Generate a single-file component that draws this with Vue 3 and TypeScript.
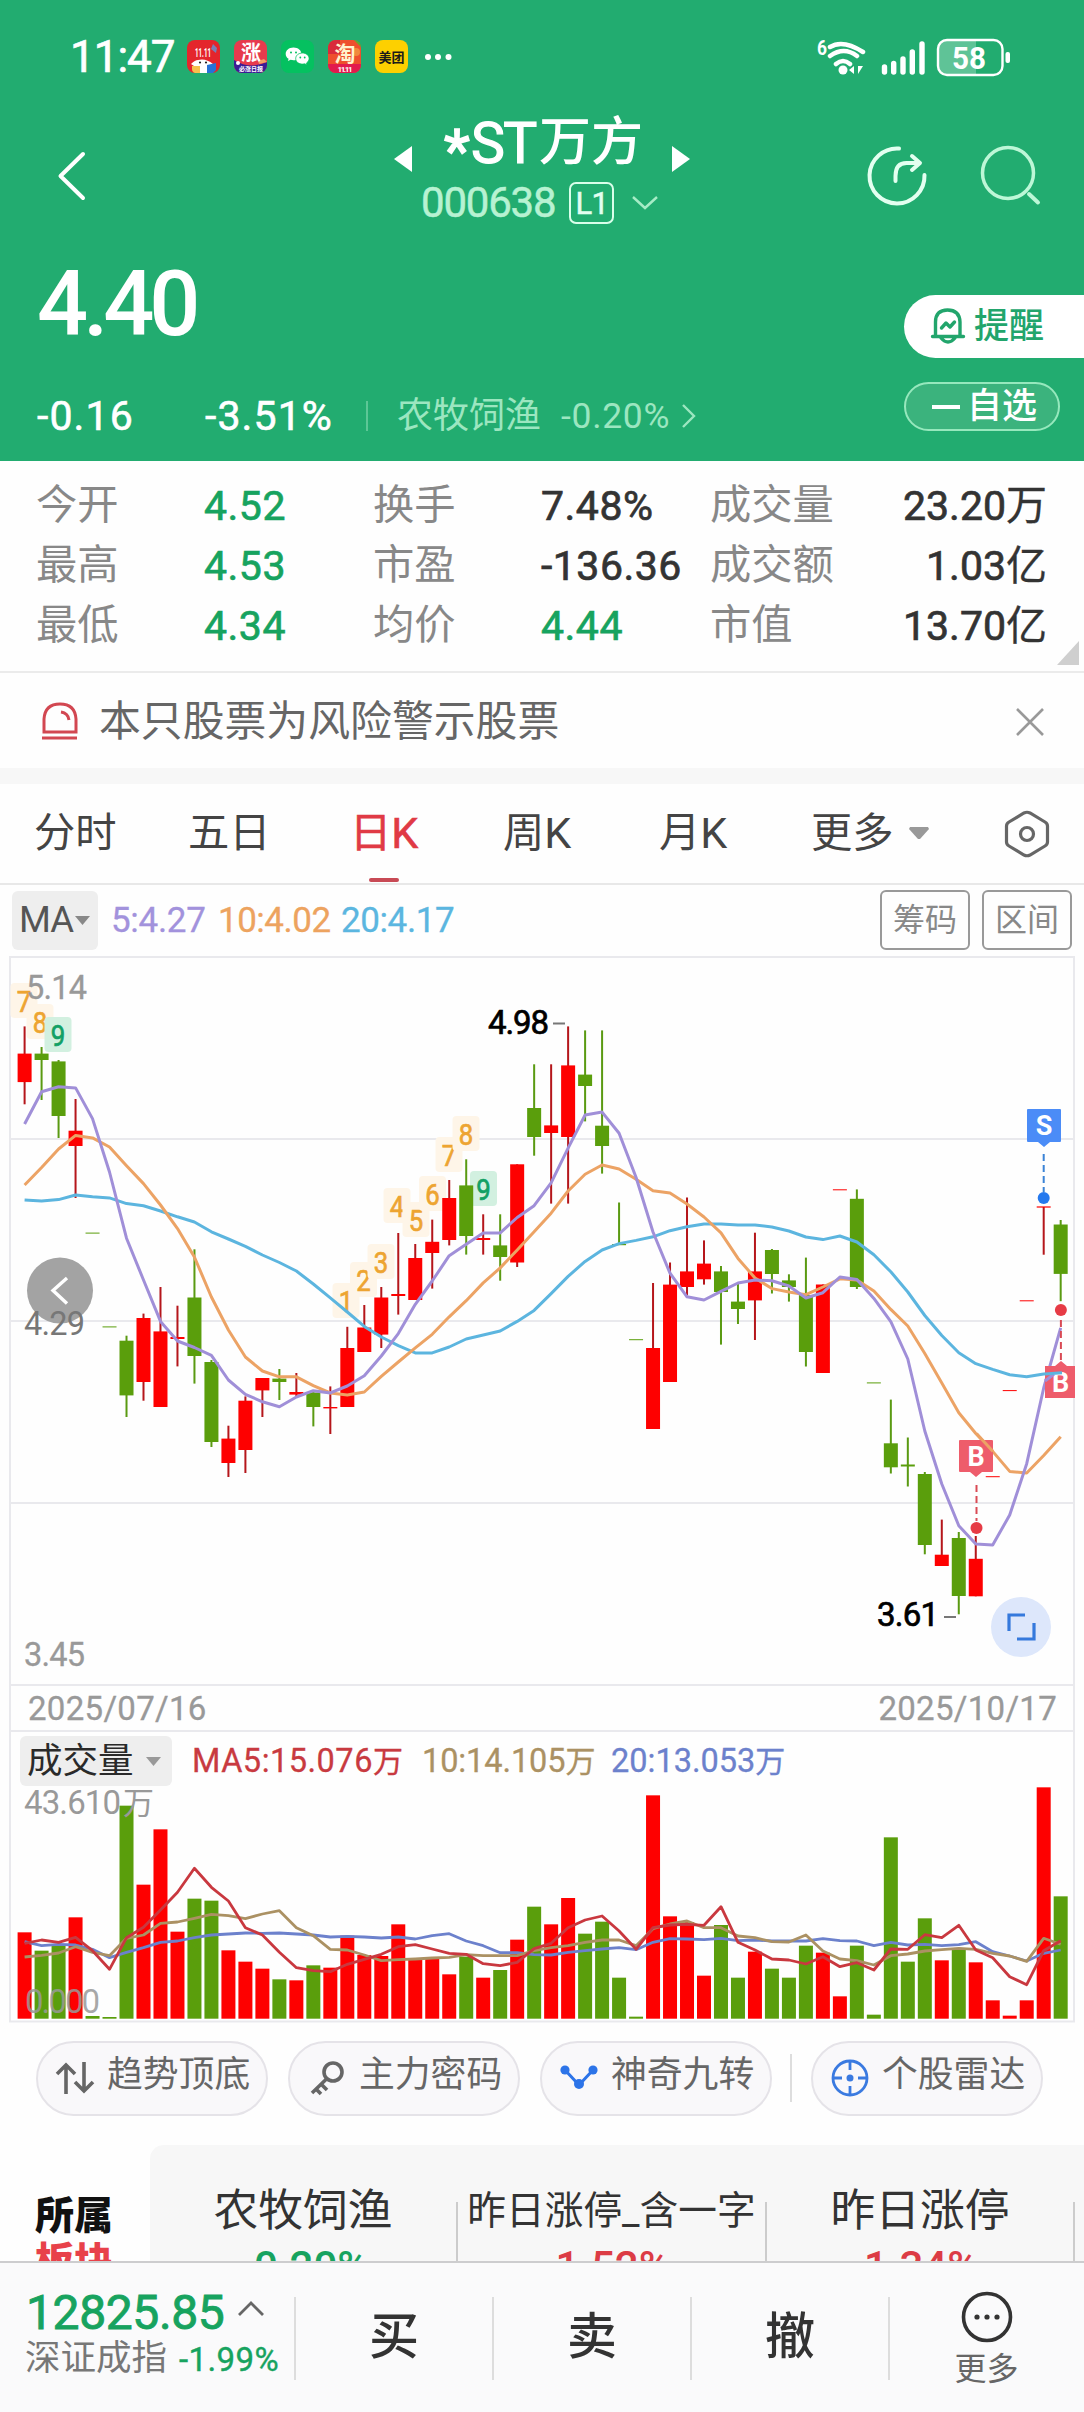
<script setup lang="ts">
type Tone = 'r' | 'g'
type Candle = [Tone, number, number, number, number]

const step = 16.985
const cx = (i: number): number => 24.6 + step * i

// tone, high, body top, body bottom, low
const candles: Candle[] = [
  ['r', 1026.4, 1053.6, 1082.1, 1104.3], ['g', 1047, 1053.6, 1060, 1100], ['g', 1060, 1061.4, 1116, 1138],
  ['r', 1099, 1130.7, 1146, 1198], ['g', 1233, 1232.6, 1233.6, 1233], ['g', 1327, 1326.4, 1327.4, 1327],
  ['g', 1335.7, 1340.7, 1395.4, 1417], ['r', 1313.6, 1318, 1382, 1400.7], ['r', 1287, 1331.4, 1407, 1407],
  ['r', 1305.7, 1337, 1339, 1366.4], ['g', 1249.3, 1297.5, 1356, 1383.6], ['g', 1360, 1362, 1442, 1447],
  ['r', 1425.7, 1438.6, 1463, 1477], ['r', 1396.4, 1400.7, 1450, 1473], ['r', 1378, 1378, 1390.4, 1417],
  ['g', 1369, 1378.6, 1382, 1400], ['r', 1373, 1392, 1394.6, 1396], ['g', 1391.4, 1392.5, 1407, 1426.4],
  ['r', 1386.4, 1407, 1408.4, 1434], ['r', 1326.8, 1348, 1407, 1407], ['r', 1305, 1327.5, 1352, 1352],
  ['r', 1287, 1297.5, 1334.6, 1348], ['r', 1233, 1294, 1296, 1314.6], ['r', 1244, 1258, 1300, 1300],
  ['r', 1219.6, 1241.8, 1253, 1288.6], ['r', 1180, 1198, 1240, 1245.4], ['g', 1159.3, 1185.4, 1236, 1254.6],
  ['r', 1214.3, 1238, 1240, 1254.6], ['g', 1214.3, 1245.4, 1257, 1280.7], ['r', 1164.3, 1164.3, 1262.5, 1267],
  ['g', 1064.3, 1108, 1137, 1155.7], ['r', 1064.3, 1125.4, 1133, 1203.6], ['r', 1026.4, 1065.4, 1137, 1203.6],
  ['g', 1030.4, 1074.6, 1086, 1121.4], ['g', 1030.4, 1125.7, 1146, 1173.6], ['g', 1202.5, 1244, 1245.2, 1245],
  ['g', 1339.6, 1339.2, 1340.2, 1339.6], ['r', 1283, 1348, 1429, 1429], ['r', 1262.5, 1284.6, 1382, 1382],
  ['r', 1197.5, 1271.4, 1287, 1295.4], ['r', 1240.4, 1263.6, 1279.3, 1284.6], ['g', 1266, 1271.4, 1292, 1344.6],
  ['g', 1284, 1301.6, 1309, 1324], ['r', 1232.7, 1271.4, 1300.4, 1340], ['g', 1249, 1250, 1274, 1293.5],
  ['g', 1274.3, 1280.4, 1287, 1301.6], ['g', 1257.6, 1295, 1352, 1366.5], ['r', 1284.5, 1284.5, 1373, 1373],
  ['r', 1189.8, 1189.3, 1190.3, 1189.8], ['g', 1189.4, 1198.8, 1287, 1289], ['g', 1382.9, 1382.4, 1383.4, 1382.9],
  ['g', 1399.6, 1443.3, 1467.3, 1473.5], ['g', 1437.5, 1464.5, 1466.5, 1486.5], ['g', 1472, 1474, 1545, 1554.3],
  ['r', 1519.6, 1554.7, 1566, 1566], ['g', 1532, 1538, 1596, 1614.3], ['r', 1536, 1558.8, 1596.3, 1596.3],
  ['r', 1476.7, 1476.2, 1477.2, 1476.7], ['r', 1390.6, 1390.1, 1391.1, 1390.6], ['r', 1300.8, 1300.3, 1301.3, 1300.8],
  ['r', 1207, 1206.4, 1207.6, 1254.7], ['g', 1220, 1224.5, 1273.9, 1301.2],
]

const ma5 = [1124, 1091.8, 1086.8, 1087.9, 1118.6, 1172, 1238.2, 1280, 1321.4, 1341, 1347.5, 1355.4, 1380, 1394.3, 1401.8, 1406.8, 1397, 1390.7, 1392.9, 1386, 1375.7, 1356, 1333.6, 1304.3, 1281, 1255.7, 1244.3, 1232.9, 1232.9, 1217.5, 1205.7, 1182.9, 1148.2, 1115, 1112.1, 1133.2, 1177.5, 1232, 1273.2, 1296.8, 1300, 1291.4, 1283, 1280, 1280.8, 1286, 1298, 1292.7, 1277, 1279.6, 1298.4, 1321.6, 1359, 1431, 1484, 1525.7, 1544, 1545, 1515, 1463.7, 1388, 1327.8]
const ma10 = [1185, 1167.5, 1149, 1135.4, 1137.9, 1147, 1165.7, 1183.6, 1205, 1228.6, 1257, 1297, 1330, 1357, 1371, 1376.8, 1376.8, 1385.7, 1393, 1395, 1392, 1376.4, 1362, 1347.9, 1334.3, 1316.8, 1300.7, 1282.9, 1267.9, 1250, 1231.8, 1213.2, 1191, 1174.3, 1165, 1169, 1179.3, 1190.7, 1193, 1204, 1217, 1232.9, 1258.4, 1278, 1288.6, 1292, 1294.7, 1287, 1278.8, 1280, 1291, 1309.4, 1326, 1353.5, 1382.9, 1412.7, 1433.5, 1451.4, 1471.4, 1473, 1455.5, 1436.7]
const ma20 = [1200, 1201, 1199.6, 1195, 1196.8, 1197.9, 1203.6, 1205.7, 1211, 1216.8, 1222, 1231.8, 1239, 1246.4, 1255, 1262.5, 1271, 1284, 1297.9, 1312, 1326.4, 1337, 1345.7, 1352.9, 1352.9, 1347, 1339, 1335, 1331, 1321.4, 1310.4, 1293.6, 1276.4, 1261.4, 1250, 1243.6, 1240.4, 1236.8, 1230.7, 1226.8, 1224, 1224, 1224.9, 1224.9, 1227, 1231, 1237, 1239.6, 1236, 1242, 1254.7, 1271.8, 1292, 1315.5, 1335.5, 1352.7, 1363.7, 1369.4, 1374.7, 1376.7, 1373.9, 1372.7]

// volume series are kept in thirds of a pixel, counted down from y = 1660
const volTop = [817, 872, 856, 772, 1068, 1071, 437, 674, 508, 815, 716, 722, 871, 905, 926, 958, 961, 916, 923, 827, 885, 888, 793, 899, 897, 943, 890, 953, 930, 839, 740, 793, 714, 821, 785, 953, 1070, 406, 769, 786, 947, 795, 953, 875, 926, 953, 857, 878, 1009, 857, 1064, 532, 905, 775, 901, 870, 907, 1021, 1067, 1021, 382, 709]
const vol5 = [850, 840, 847, 832, 872, 928, 833, 802, 750, 697, 625, 682, 723, 803, 825, 877, 923, 932, 935, 913, 898, 883, 860, 854, 867, 880, 883, 911, 917, 907, 866, 850, 803, 780, 768, 813, 868, 803, 795, 793, 796, 740, 847, 870, 897, 900, 912, 890, 920, 908, 930, 867, 868, 824, 833, 796, 870, 893, 950, 974, 872, 842]
const vol10 = [891, 886, 879, 860, 877, 887, 835, 825, 790, 786, 775, 763, 767, 776, 762, 752, 803, 827, 868, 870, 885, 902, 899, 897, 894, 892, 884, 887, 887, 887, 872, 863, 857, 847, 840, 840, 857, 806, 792, 783, 803, 803, 828, 833, 845, 846, 825, 873, 897, 902, 915, 887, 882, 873, 869, 865, 868, 880, 888, 904, 835, 853]
const vol20 = [845, 857, 853, 855, 868, 893, 877, 863, 847, 843, 833, 825, 822, 819, 820, 819, 822, 825, 831, 829, 831, 834, 831, 837, 827, 821, 843, 857, 878, 878, 884, 885, 877, 872, 867, 863, 869, 847, 836, 837, 839, 835, 842, 840, 843, 843, 843, 836, 842, 843, 857, 847, 855, 853, 857, 854, 845, 875, 888, 903, 880, 870]

const volY = (v: number): number => 1660 + v / 3
const line = (ys: number[]): string => ys.map((y, i) => `${cx(i).toFixed(1)},${y.toFixed(1)}`).join(' ')
const volLine = (vs: number[]): string => line(vs.map(volY))

const fill = (t: Tone): string => (t === 'r' ? '#fe0000' : '#5a9e0c')
const wick = (t: Tone): string => (t === 'r' ? '#b5161b' : '#5a9a12')

const counts: { n: number; x: number; y: number }[] = [
  { n: 7, x: 24, y: 1001 }, { n: 8, x: 40, y: 1022 }, { n: 9, x: 58, y: 1035 },
  { n: 1, x: 346, y: 1301 }, { n: 2, x: 363.5, y: 1280 }, { n: 3, x: 381, y: 1262 },
  { n: 4, x: 397, y: 1206 }, { n: 5, x: 416, y: 1220 }, { n: 6, x: 432.5, y: 1194 },
  { n: 7, x: 449, y: 1155 }, { n: 8, x: 466, y: 1134 }, { n: 9, x: 483.5, y: 1189 },
]

const stats = [
  ['今开', '4.52', 'up', '换手', '7.48%', '', '成交量', '23.20', '万'],
  ['最高', '4.53', 'up', '市盈', '-136.36', '', '成交额', '1.03', '亿'],
  ['最低', '4.34', 'up', '均价', '4.44', 'up', '市值', '13.70', '亿'],
]
</script>

<template>
  <div class="page">
    <header class="head">
      <div class="status">
        <span class="time">11:47</span>
        <div class="apps">
          <svg class="app" viewBox="0 0 33 33">
            <rect width="33" height="33" rx="8" fill="#e4252c" />
            <path d="M26 4l4 4-1 5-5-4z" fill="#7a7fb5" />
            <text x="16" y="17" text-anchor="middle" font-size="13" font-weight="700" fill="#fff" textLength="16" lengthAdjust="spacingAndGlyphs">11.11</text>
            <path d="M4 24q4-4 7-4 8-2 15 4l-3 2H7z" fill="#fff" />
            <path d="M5 26h10v7H8q-3-1-3-4z" fill="#f6c14c" />
            <path d="M13 26h8v7h-8z" fill="#fff" />
            <path d="M20 25l9-2v7l-3 3h-6z" fill="#2573d8" />
            <circle cx="13" cy="22.500" r="1.100" fill="#222" /><circle cx="19" cy="22.500" r="1.100" fill="#222" />
          </svg>
          <svg class="app" viewBox="0 0 33 33">
            <defs><clipPath id="c2"><rect width="33" height="33" rx="8" /></clipPath></defs>
            <g clip-path="url(#c2)">
              <rect width="33" height="33" fill="#e73a4d" />
              <path d="M0 20q16 10 33 2v11H0z" fill="#3a1c96" />
              <path d="M24 21l6-2 3 3-8 2z" fill="#f2a066" />
            </g>
            <text x="17" y="20" text-anchor="middle" font-size="20" font-weight="700" fill="#fff">涨</text>
            <text x="17" y="31" text-anchor="middle" font-size="6" font-weight="700" fill="#fff">必涨日报</text>
            <circle cx="4" cy="23" r="2" fill="#fff" />
          </svg>
          <svg class="app" viewBox="0 0 33 33">
            <rect width="33" height="33" rx="8" fill="#05c160" />
            <path d="M12.500 7.500c-4.600 0-7.800 2.900-7.800 6.400 0 2 1.100 3.700 2.900 4.900l-.7 2.300 2.700-1.400c.9.300 1.900.5 2.900.5 4.600 0 7.900-2.800 7.900-6.300s-3.300-6.400-7.900-6.400z" fill="#fff" />
            <path d="M21.500 13c-4 0-6.800 2.500-6.800 5.600s2.800 5.500 6.800 5.500c.8 0 1.600-.1 2.300-.3l2.300 1.200-.6-2c1.600-1.100 2.600-2.600 2.600-4.400 0-3.100-2.800-5.600-6.600-5.600z" fill="#fff" stroke="#05c160" stroke-width=".8" />
            <circle cx="10" cy="12.500" r="1" fill="#05c160" /><circle cx="15" cy="12.500" r="1" fill="#05c160" />
            <circle cx="19.300" cy="17.500" r=".9" fill="#05c160" /><circle cx="23.700" cy="17.500" r=".9" fill="#05c160" />
          </svg>
          <svg class="app" viewBox="0 0 33 33">
            <defs><clipPath id="c4"><rect width="33" height="33" rx="8" /></clipPath></defs>
            <g clip-path="url(#c4)">
              <rect width="33" height="33" fill="#ee4f2d" />
              <rect width="12" height="14" fill="#d92a3a" />
              <path d="M26 0h7v7z" fill="#55b330" />
              <circle cx="28" cy="12" r="4" fill="#f08a3c" />
              <rect y="24" width="33" height="9" fill="#e21a4e" />
            </g>
            <text x="17" y="21" text-anchor="middle" font-size="21" font-weight="700" fill="#fff3cf">淘</text>
            <text x="17" y="31.500" text-anchor="middle" font-size="8" font-weight="700" fill="#fff" textLength="15">11.11</text>
          </svg>
          <svg class="app" viewBox="0 0 33 33">
            <rect width="33" height="33" rx="8" fill="#fdd000" />
            <text x="16.500" y="21.500" text-anchor="middle" font-size="13" font-weight="700" fill="#1a1a1a">美团</text>
          </svg>
        </div>
        <svg class="dots" width="28" height="8" viewBox="0 0 28 8"><circle cx="4" cy="4" r="3" fill="#fff" /><circle cx="14" cy="4" r="3" fill="#fff" /><circle cx="24.500" cy="4" r="3" fill="#fff" /></svg>
        <svg class="signals" width="196" height="40" viewBox="816 35 196 40" fill="none" stroke="#fff">
          <text x="817" y="53" font-size="20" font-weight="700" fill="#fff" stroke="none" textLength="10" lengthAdjust="spacingAndGlyphs">6</text>
          <path d="M830 45q13-8 33 5M830 54q14-10 27 0M836 62q7-6 14 0" stroke-width="4.500" stroke-linecap="round" />
          <circle cx="843" cy="68" r="4.500" fill="#fff" stroke="none" />
          <path d="M854 64v8l-5-4zM858 64v8l5-8z" fill="#fff" stroke="none" />
          <path d="M884.500 65v5M893.700 61.500v8.500M903 57v13M912.300 50v20M922 42v28" stroke-width="5.400" stroke-linecap="round" />
          <path d="M945 38h31v34h-31q-7 0-7-8V46q0-8 7-8z" fill="#fff" fill-opacity=".28" stroke="none" />
          <rect x="938" y="38" width="64.500" height="35" rx="9" stroke-width="2.400" />
          <rect x="1005.500" y="50" width="4.500" height="11" rx="2" fill="#fff" stroke="none" />
          <text x="969" y="67" text-anchor="middle" font-size="32" font-weight="700" fill="#fff" stroke="none" textLength="34" lengthAdjust="spacingAndGlyphs">58</text>
        </svg>
      </div>

      <div class="nav">
        <svg class="back" width="30" height="54" viewBox="57 149 30 54" fill="none" stroke="#fff" stroke-width="4" stroke-linecap="round" stroke-linejoin="round"><path d="M83 154L60.500 176 83 198" /></svg>
        <svg class="tri" width="20" height="28" viewBox="0 0 20 28"><path d="M18 1v26L0 14z" fill="#fff" /></svg>
        <div class="title">
          <div class="name"><span class="star">*</span><span class="st">ST</span>万方</div>
          <div class="code">
            <span>000638</span><em>L1</em>
            <svg width="26" height="14" viewBox="0 0 26 14" fill="none" stroke="#a6ecc6" stroke-width="2.400"><path d="M1 1l12 11L25 1" /></svg>
          </div>
        </div>
        <svg class="tri right" width="20" height="28" viewBox="0 0 20 28"><path d="M1 1v26l18-13z" fill="#fff" /></svg>
        <svg class="tools" width="180" height="66" viewBox="866 142 180 66" fill="none" stroke-width="4" stroke-linecap="round">
          <path d="M900 148.500A27.500 27.500 0 1 0 925.500 175" stroke="#e3fff0" />
          <path d="M896.500 181v-5q0-13 11-13h12M913 156l8 7-8 7" stroke="#e3fff0" stroke-linejoin="round" />
          <circle cx="1009" cy="173" r="25.500" stroke="#bdf7d7" stroke-width="3.500" />
          <path d="M1030 194l9 8.500" stroke="#bdf7d7" />
        </svg>
      </div>

      <div class="quote">
        <div class="left">
          <div class="price">4.40</div>
          <div class="chg">
            <span class="c1">-0.16</span><span class="c2">-3.51%</span><i></i>
            <span class="ind">农牧饲渔</span><span class="c3">-0.20%</span>
            <svg width="16" height="26" viewBox="0 0 16 26" fill="none" stroke="#9ce6c0" stroke-width="2.400"><path d="M2 2l11 11L2 24" /></svg>
          </div>
        </div>
        <div class="acts">
          <div class="remind">
            <svg width="36" height="38" viewBox="0 0 36 38" fill="none" stroke="#22a56c" stroke-width="3.400" stroke-linejoin="round" stroke-linecap="round">
              <path d="M5.500 29V15q0-12 12-12t12.500 12v14M2.500 29.500h31M11 31q7 8 14 0M11.500 21l4.500-5 4 4 4.500-5" />
            </svg>
            提醒
          </div>
          <div class="fav"><b></b>自选</div>
        </div>
      </div>
    </header>

    <section class="stats">
      <div v-for="s in stats" :key="s[0]" class="row">
        <span class="lab a">{{ s[0] }}</span><span class="val b" :class="s[2]">{{ s[1] }}</span>
        <span class="lab a">{{ s[3] }}</span><span class="val b" :class="s[5]">{{ s[4] }}</span>
        <span class="lab">{{ s[6] }}</span><span class="val end">{{ s[7] }}<u>{{ s[8] }}</u></span>
      </div>
      <svg class="corner" width="24" height="26" viewBox="0 0 24 26"><path d="M23 1v24H1z" fill="#cfcfcf" /></svg>
    </section>

    <section class="alert">
      <svg width="38" height="40" viewBox="0 0 38 40" fill="none" stroke="#d24751" stroke-width="3"><path d="M3 30V17Q4 2 19 2t16 15v13zM1 36h35M20 10q7 1 8 8" /></svg>
      <span>本只股票为风险警示股票</span>
      <svg class="x" width="28" height="28" viewBox="0 0 28 28" fill="none" stroke="#999" stroke-width="2.600"><path d="M1 1l26 26M27 1L1 27" /></svg>
    </section>

    <nav class="tabs">
      <span class="t1">分时</span><span class="t2">五日</span><span class="t3 on">日<q>K</q></span><span class="t4">周<q>K</q></span><span class="t5">月<q>K</q></span>
      <span class="t6">更多<svg width="22" height="13" viewBox="0 0 22 13"><path d="M2 0h18l1 2-9 10h-2L1 2z" fill="#999" /></svg></span>
      <svg class="hex" width="46" height="48" viewBox="0 0 46 48" fill="none" stroke="#666" stroke-width="3.200"><path d="M20 3q3-1.500 6 0l15 9q2.500 1.500 2.500 4v16q0 2.500-2.500 4l-15 9q-3 1.500-6 0L5 36q-2.500-1.500-2.500-4V16q0-2.500 2.500-4z" /><circle cx="23" cy="24" r="6.500" /></svg>
    </nav>

    <div class="ma">
      <span class="mabox">MA<svg width="15" height="9" viewBox="0 0 15 9"><path d="M0 0h15L7.500 9z" fill="#888" /></svg></span>
      <span class="m5">5:4.27</span><span class="m10">10:4.02</span><span class="m20">20:4.17</span>
      <span class="btn first">筹码</span><span class="btn">区间</span>
    </div>

    <svg class="kline" width="1084" height="731" viewBox="0 954 1084 731">
      <g stroke="#e9e9ed" stroke-width="2">
        <path d="M9 957h1066M9 1139h1066M9 1321h1066M9 1503h1066M10 956v729M1074 956v729" fill="none" />
      </g>
      <g v-for="(c, i) in counts" :key="i">
        <rect :x="c.x - 13.500" :y="c.y - 18" width="27" height="35" rx="4" :fill="c.n === 9 ? '#d2f0e0' : '#fef5e8'" />
        <text :x="c.x" :y="c.y + 10.500" text-anchor="middle" font-size="29.500" :fill="c.n === 9 ? '#12a065' : '#eda431'" :stroke="c.n === 9 ? '#12a065' : '#eda431'" stroke-width=".7" textLength="14.500" lengthAdjust="spacingAndGlyphs">{{ c.n }}</text>
      </g>
      <g font-size="32.500" fill="#999" stroke="#999" stroke-width=".3">
        <text x="26" y="999" textLength="61">5.14</text>
        <text x="24" y="1666" textLength="61">3.45</text>
      </g>
      <g v-for="(k, i) in candles" :key="'k' + i">
        <rect :x="cx(i) - 1" :y="k[1]" width="2" :height="Math.max(0, k[4] - k[1])" :fill="wick(k[0])" />
        <rect :x="cx(i) - 7" :y="k[2]" width="14" :height="k[3] - k[2]" :fill="fill(k[0])" />
      </g>
      <g fill="none" stroke-width="3" stroke-linejoin="round">
        <polyline :points="line(ma20)" stroke="#5cb5df" />
        <polyline :points="line(ma10)" stroke="#eca365" />
        <polyline :points="line(ma5)" stroke="#a08fd8" />
      </g>
      <circle cx="60" cy="1290.500" r="33" fill="#a3a3a3" />
      <path d="M67 1278l-14 12.500 14 13" fill="none" stroke="#fff" stroke-width="3.400" />
      <text x="24" y="1335" font-size="32.500" fill="#777" textLength="61">4.29</text>
      <g font-size="33" fill="#000" stroke="#000" stroke-width=".7">
        <text x="488" y="1033.500" textLength="61">4.98</text>
        <text x="877" y="1626" textLength="62">3.61</text>
      </g>
      <path d="M553 1023.500h12M944 1617h12" stroke="#777" stroke-width="2" />
      <g stroke-width="2" stroke-dasharray="7 4">
        <path d="M1043.700 1154v38" stroke="#3b83d6" />
        <path d="M976.500 1485v36M1060.900 1320v40" stroke="#d94a55" />
      </g>
      <circle cx="1043.700" cy="1198" r="6" fill="#2579ee" />
      <circle cx="976.500" cy="1528" r="6" fill="#e63b45" />
      <circle cx="1060.900" cy="1310" r="6" fill="#e63b45" />
      <path d="M1028 1109h32q1 0 1 1v31q0 1-1 1h-10l-6 5-6-5h-10q-1 0-1-1v-31q0-1 1-1z" fill="#4b8cf7" />
      <path d="M960 1440h32q1 0 1 1v30q0 1-1 1h-10l-6 5-6-5h-10q-1 0-1-1v-30q0-1 1-1z" fill="#ee5c6b" />
      <path d="M1045 1366h10l6-5 6 5h8v32h-30z" fill="#ee5c6b" />
      <g font-size="27" font-weight="700" fill="#fff" text-anchor="middle">
        <text x="1044" y="1135">S</text><text x="976" y="1465.500">B</text><text x="1060.500" y="1391.500">B</text>
      </g>
      <path d="M993 1451.400L976.500 1433.500" stroke="#eca365" stroke-width="3" />
      <path d="M1045 1381l9-7" stroke="#a08fd8" stroke-width="3" /><path d="M1045 1373.900l17-1.200" stroke="#5cb5df" stroke-width="3" />
      <circle cx="1021" cy="1627" r="30" fill="#dde7fb" />
      <path d="M1009 1631v-16h16M1034 1623v16h-17" fill="none" stroke="#3579dc" stroke-width="3.200" />
    </svg>

    <div class="dates"><span>2025/07/16</span><span>2025/10/17</span></div>

    <div class="vol">
      <div class="volhead">
        <span class="volbox">成交量<svg width="15" height="9" viewBox="0 0 15 9"><path d="M0 0h15L7.500 9z" fill="#999" /></svg></span>
        <span class="v5">MA5:15.076<u>万</u></span><span class="v10">10:14.105<u>万</u></span><span class="v20">20:13.053<u>万</u></span>
      </div>
      <svg class="volsvg" width="1084" height="237" viewBox="0 1786 1084 237">
        <path d="M10 1786v235.500h1064v-235.500" fill="none" stroke="#e9e9ed" stroke-width="2" />
        <rect v-for="(v, i) in volTop" :key="i" :x="cx(i) - 7" :y="volY(v)" width="14" :height="2018.700 - volY(v)" :fill="fill(candles[i][0])" />
        <g fill="none" stroke-width="2.800" stroke-linejoin="round">
          <polyline :points="volLine(vol20)" stroke="#6c81cc" />
          <polyline :points="volLine(vol10)" stroke="#ab9163" />
          <polyline :points="volLine(vol5)" stroke="#c9383f" />
        </g>
        <g font-size="33" fill="#999">
          <text x="24" y="1814" textLength="97">43.610</text><text x="123" y="1814" font-size="31">万</text>
          <text x="25" y="2013" textLength="75" fill-opacity=".85">0.000</text>
        </g>
      </svg>
    </div>

    <div class="pills">
      <span class="pill"><svg width="40" height="34" viewBox="0 0 40 34" fill="none" stroke="#666" stroke-width="3.600"><path d="M11 33V4M2 13l9-9 9 9M29 1v29M20 21l9 9 9-9" /></svg>趋势顶底</span>
      <span class="pill"><svg width="40" height="36" viewBox="-4 0 40 36" fill="none" stroke="#666" stroke-width="3.600"><circle cx="22" cy="12" r="9" /><path d="M16 18.500L1 33M10 24l6 6M5 29l5 5" /></svg>主力密码</span>
      <span class="pill"><svg width="40" height="30" viewBox="0 0 40 30"><path d="M6 7l14 15L34 7" fill="none" stroke="#2d74e8" stroke-width="3" /><g fill="#2d74e8"><circle cx="6" cy="7" r="4.600" /><circle cx="20" cy="21" r="5" /><circle cx="34" cy="7" r="4.600" /></g></svg>神奇九转</span>
      <i></i>
      <span class="pill last"><svg width="40" height="40" viewBox="0 0 40 40" fill="none" stroke="#3a7ae0" stroke-width="2.800"><circle cx="20" cy="20" r="17" /><path d="M20 3v9M20 28v9M3 20h9M28 20h9" /><circle cx="20" cy="20" r="3.500" fill="#3a7ae0" stroke="none" /></svg>个股雷达</span>
    </div>

    <section class="sector">
      <div class="own"><span>所属</span><span class="red">板块</span></div>
      <div class="cards">
        <div class="card w1"><span>农牧饲渔</span><b class="dn">-0.20%</b></div>
        <div class="card w2"><span>昨日涨停_含一字</span><b>1.52%</b></div>
        <div class="card w3"><span>昨日涨停</span><b>1.34%</b></div>
      </div>
    </section>

    <footer class="bar">
      <div class="index">
        <div class="top">12825.85<svg width="26" height="16" viewBox="0 0 26 16" fill="none" stroke="#666" stroke-width="2.800"><path d="M1 14L13 2l12 12" /></svg></div>
        <div class="bot"><span>深证成指</span><b>-1.99%</b></div>
      </div>
      <div class="op">买</div><div class="op">卖</div><div class="op">撤</div>
      <div class="more">
        <svg width="52" height="52" viewBox="0 0 52 52"><circle cx="26" cy="26" r="23.500" fill="none" stroke="#333" stroke-width="3.600" /><g fill="#333"><circle cx="16" cy="26" r="2.600" /><circle cx="26" cy="26" r="2.600" /><circle cx="36" cy="26" r="2.600" /></g></svg>
        <span>更多</span>
      </div>
    </footer>
  </div>
</template>

<style>
body { margin: 0; background: #fff; }
</style>

<style scoped>
.page { width: 1084px; height: 2412px; overflow: hidden; background: #fefefe; display: flex; flex-direction: column; font-family: Roboto, "Noto Sans CJK SC", sans-serif; box-sizing: border-box; line-height: 1; white-space: nowrap; }
.page * { box-sizing: border-box; }
svg { display: block; flex: none; }
u { text-decoration: none; }
q { quotes: none; }
i, em { font-style: normal; }

.head { height: 461px; flex: none; background: #22ac70; color: #fff; display: flex; flex-direction: column; }
.status { height: 112px; padding: 1px 0 0 70px; display: flex; align-items: center; }
.time { width: 117px; font-size: 44px; letter-spacing: -1px; -webkit-text-stroke: .7px; }
.apps { display: flex; gap: 14px; }
.app { width: 33px; height: 33px; }
.dots { margin-left: 16px; }
.signals { margin-left: 364px; }

.nav { height: 128px; display: flex; align-items: flex-start; padding-left: 57px; }
.back { margin-top: 37px; }
.tri { margin: 33px 0 0 307px; }
.title { width: 240px; margin-left: 7px; }
.name { font-size: 52px; font-weight: 500; height: 66px; line-height: 61px; padding-left: 23px; display: flex; }
.star { font-weight: 400; -webkit-text-stroke: 1.500px; font-size: 60px; line-height: 78px; width: 27px; }
.st { font-weight: 400; -webkit-text-stroke: 1.200px; font-size: 57px; line-height: 64px; width: 68px; letter-spacing: -1.500px; }
.code { display: flex; align-items: center; height: 50px; color: #b7f2d2; font-size: 42px; letter-spacing: -1.200px; -webkit-text-stroke: .5px; }
.code em { width: 45px; height: 42px; border: 2.500px solid #d9ffea; border-radius: 7px; margin: 0 18px 0 14px; font-size: 31px; letter-spacing: -.5px; display: flex; align-items: center; justify-content: center; color: #e3fff0; }
.tri.right { margin-left: 10px; }
.tools { margin: 30px 0 0 174px; }

.quote { flex: 1; display: flex; justify-content: space-between; padding-left: 37px; }
.price { font-size: 90px; font-weight: 500; letter-spacing: -5px; margin-top: 18px; height: 123px; line-height: 94px; }
.chg { display: flex; align-items: center; height: 70px; font-size: 41px; line-height: 70px; }
.c1 { width: 168px; letter-spacing: 1.100px; -webkit-text-stroke: .6px; }
.c2 { width: 161px; letter-spacing: 1.100px; -webkit-text-stroke: .6px; }
.chg i { width: 2px; height: 30px; background: #5cc796; margin-right: 29px; }
.ind { font-size: 36px; color: #9ce6c0; width: 164px; }
.c3 { font-size: 35.500px; color: #9ce6c0; width: 120px; letter-spacing: .7px; }
.acts { width: 180px; }
.remind { margin-top: 55px; height: 63px; border-radius: 32px 0 0 32px; background: #fff; color: #22a56c; font-size: 35px; font-weight: 500; display: flex; align-items: center; padding: 0 0 1px 26px; gap: 8px; }
.fav { margin-top: 24px; width: 156px; height: 49px; border: 2px solid #96e8bd; border-radius: 25px; background: #3bb37d; display: flex; align-items: center; padding: 0 0 1px 26px; font-size: 35px; font-weight: 500; }
.fav b { width: 28px; height: 3.500px; background: #fff; margin: 2px 7px 0 0; }

.stats { height: 212px; flex: none; border-bottom: 2px solid #ebebeb; padding: 15px 37px 0 36px; position: relative; }
.row { display: flex; height: 60px; align-items: center; }
.lab { font-size: 41.300px; color: #888; }
.lab.a { width: 168px; }
.val { font-size: 41px; color: #333; letter-spacing: .5px; -webkit-text-stroke: .7px; }
.val.b { width: 169px; }
.val.up { color: #17a35f; }
.val.end { margin-left: auto; letter-spacing: 0; }
.val u { font-size: 41px; -webkit-text-stroke: .3px; }
.corner { position: absolute; right: 4px; bottom: 5px; }

.alert { height: 111px; flex: none; border-bottom: 16px solid #f7f7f7; display: flex; align-items: center; padding: 2px 40px 0 41px; font-size: 41.850px; color: #666; }
.alert span { margin-left: 20px; }
.x { margin-left: auto; }

.tabs { height: 101px; flex: none; border-bottom: 2px solid #e8e8e8; display: flex; align-items: center; padding-left: 34px; font-size: 41.300px; color: #444; }
.tabs > span { height: 99px; line-height: 97px; display: flex; align-items: center; }
.tabs q { font-size: 43px; }
.t1 { width: 154px; }
.t2 { width: 162px; }
.t3 { width: 153px; }
.t4 { width: 156px; }
.t5 { width: 152px; }
.t6 { width: 193px; }
.t6 svg { margin-left: 14px; }
.on { color: #e03a45; position: relative; -webkit-text-stroke: .6px; }
.on::after { content: ""; position: absolute; left: 19px; bottom: 1px; width: 30px; height: 4px; border-radius: 2px; background: #c84a55; }

.ma { height: 69px; flex: none; display: flex; align-items: center; padding: 1px 12px 0; font-size: 35px; }
.mabox { width: 86px; height: 59px; background: #eee; border-radius: 6px; display: flex; align-items: center; justify-content: center; color: #555; font-size: 36.500px; gap: 2px; letter-spacing: -1px; padding-right: 1px; }
.m5 { color: #a292dc; width: 107px; margin-left: 13px; letter-spacing: -.3px; -webkit-text-stroke: .3px; }
.m10 { color: #eda35f; width: 123px; letter-spacing: -.5px; -webkit-text-stroke: .3px; }
.m20 { color: #5bb6e0; letter-spacing: -.4px; -webkit-text-stroke: .3px; }
.btn { width: 90px; height: 60px; border: 2px solid #999; border-radius: 6px; font-size: 32px; color: #888; display: flex; align-items: center; justify-content: center; margin-left: 12px; }
.btn.first { margin-left: auto; }

.kline { font-family: Roboto, "Noto Sans CJK SC", sans-serif; }
.dates { flex: none; height: 48px; margin: -1px 9px 0 9px; border: 2px solid #e9e9ed; display: flex; justify-content: space-between; align-items: center; padding: 1px 16px 0 17px; font-size: 33px; letter-spacing: .3px; color: #999; -webkit-text-stroke: .3px; }
.vol { flex: none; }
.volhead { height: 54px; margin: 0 9px; border: solid #e9e9ed; border-width: 0 2px; display: flex; align-items: center; padding: 4px 0 0 9px; font-size: 32.500px; }
.volbox { width: 152px; height: 50px; background: #eee; border-radius: 6px; display: flex; align-items: center; padding: 1px 0 0 7px; font-size: 35.500px; color: #2a2a2a; gap: 12px; }
.volhead u { font-size: 30px; letter-spacing: 0; }
.v5 { color: #c83a40; width: 230px; margin-left: 20px; letter-spacing: .5px; -webkit-text-stroke: .3px; }
.v10 { color: #ab9163; width: 189px; letter-spacing: -.1px; -webkit-text-stroke: .3px; }
.v20 { color: #6c81cc; -webkit-text-stroke: .3px; }

.pills { height: 122px; flex: none; display: flex; align-items: center; padding: 0 0 12px 36px; gap: 20px; }
.pill { width: 232px; height: 75px; border: 2px solid #e5e3e8; border-radius: 38px; background: #f9f8fa; display: flex; align-items: center; font-size: 35.800px; color: #666; padding: 0 0 5px 17px; gap: 12px; }
.pill svg { margin-top: 5px; }
.pills i { width: 2px; height: 48px; background: #ddd; margin: 0 -1px 0 -2px; }

.sector { height: 116px; flex: none; overflow: hidden; display: flex; }
.own { width: 150px; padding: 48px 0 0 35px; font-size: 39px; font-weight: 900; color: #111; line-height: 46px; display: flex; flex-direction: column; }
.own .red { color: #e8414a; }
.cards { flex: 1; background: #f7f7f7; border-radius: 14px 0 0 0; display: flex; }
.card { display: flex; flex-direction: column; align-items: center; color: #333; font-size: 44.800px; position: relative; }
.card::after { content: ""; position: absolute; right: 0; top: 57px; bottom: 0; width: 2px; background: #ccc; }
.card span { margin-top: 34px; height: 62px; line-height: 64px; margin-right: 2px; }
.card b { font-size: 42px; font-weight: 500; line-height: 42px; margin-top: 5px; color: #dc3c45; }
.card b.dn { color: #17a35f; }
.w1 { width: 308px; }
.w2 { width: 309px; font-size: 38.700px; }
.w3 { width: 308px; }

.bar { flex: 1; background: #fafafb; border-top: 2px solid #cdcdcf; display: flex; }
.index { width: 294px; padding: 24px 0 0 25px; }
.top { display: flex; align-items: center; gap: 14px; font-size: 48px; height: 52px; color: #17a35f; letter-spacing: -.4px; -webkit-text-stroke: .9px; padding-left: 1px; }
.top svg { margin-bottom: 8px; }
.bot { display: flex; align-items: center; height: 40px; font-size: 35.500px; color: #777; }
.bot b { font-weight: 400; font-size: 33px; color: #17a35f; margin-left: 12px; letter-spacing: .4px; -webkit-text-stroke: .4px; }
.op { width: 198px; height: 83px; margin-top: 34px; border-left: 2px solid #ddd; display: flex; align-items: center; justify-content: center; font-size: 50px; font-weight: 500; color: #333; padding-bottom: 3px; }
.more { width: 195px; height: 83px; margin-top: 34px; border-left: 2px solid #ddd; display: flex; flex-direction: column; align-items: center; }
.more svg { margin-top: -6px; }
.more span { font-size: 32px; color: #666; margin-top: 10px; }
</style>
